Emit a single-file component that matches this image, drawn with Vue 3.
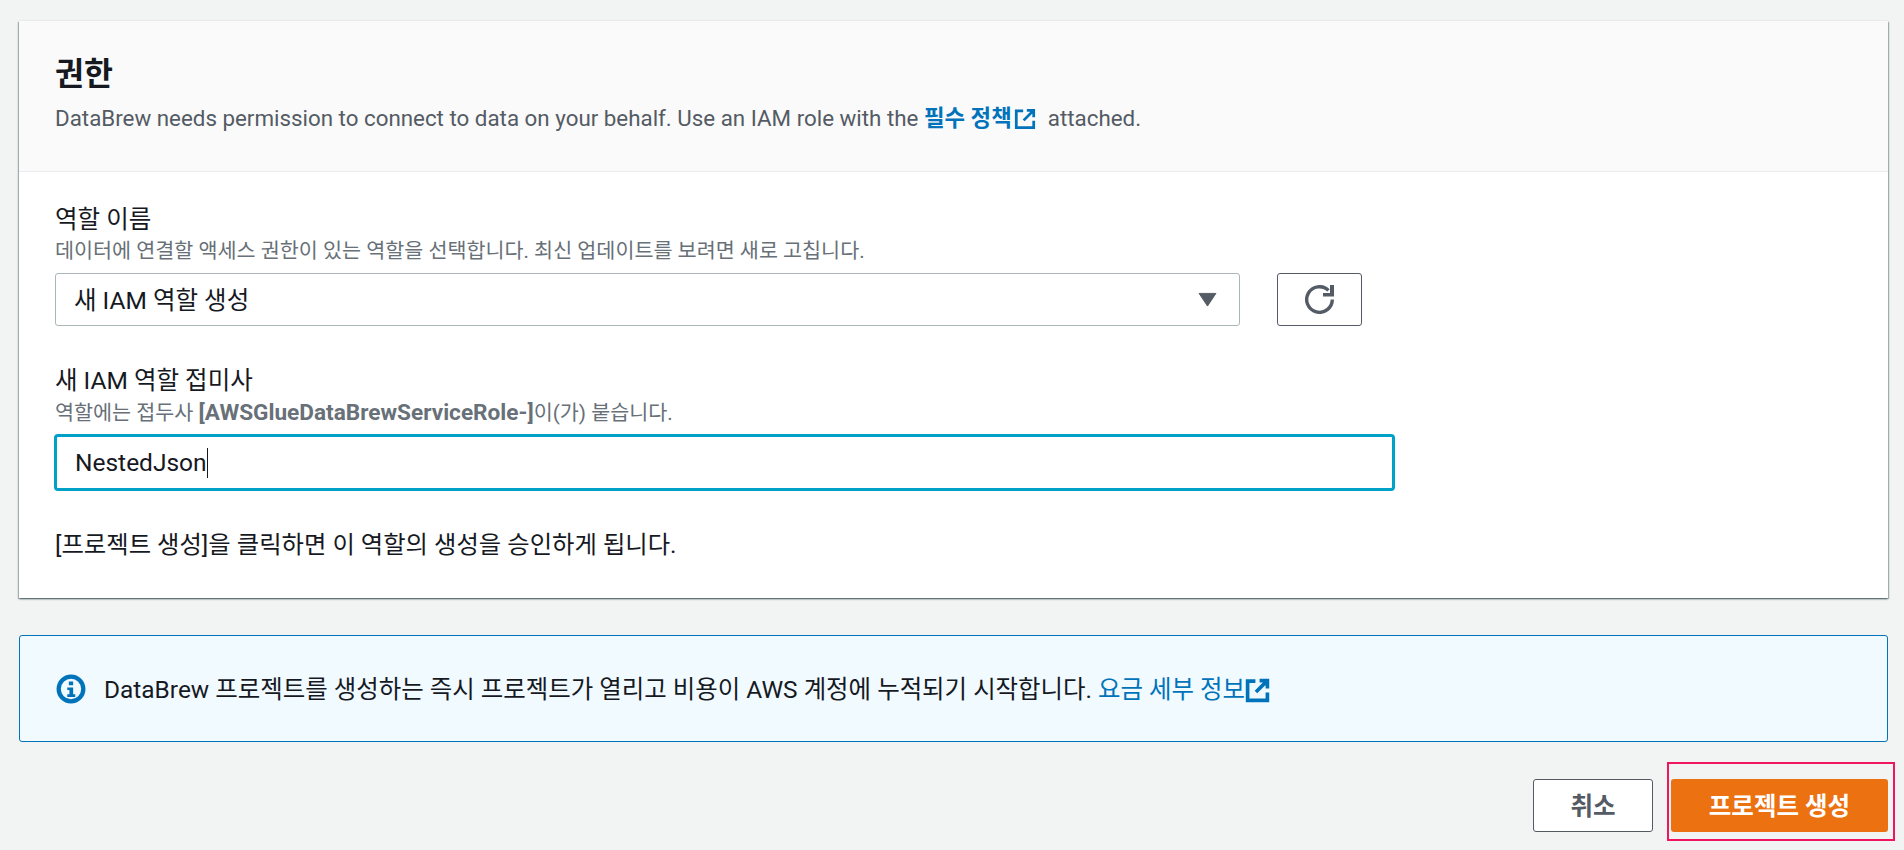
<script setup>
import { ref } from 'vue'

const roleName = ref('새 IAM 역할 생성')
const suffix = ref('NestedJson')
</script>

<template>
  <div class="page">
    <section class="card">
      <header class="card-head">
        <h2>권한</h2>
        <p>
          DataBrew needs permission to connect to data on your behalf. Use an IAM role with the
          <a class="link strong">필수 정책
            <svg class="ext" viewBox="0 0 24 24" fill="none" stroke="currentColor" stroke-width="3">
              <path d="M10 3H2.500v18.500h19V14" />
              <path d="M14 2.500h7.500V10M21 3L10.500 13.500" />
            </svg>
          </a>
          attached.
        </p>
      </header>
      <div class="card-body">
        <div class="field">
          <div class="label">역할 이름</div>
          <div class="hint">데이터에 연결할 액세스 권한이 있는 역할을 선택합니다. 최신 업데이트를 보려면 새로 고칩니다.</div>
          <div class="select-row">
            <div class="select">
              <span>{{ roleName }}</span>
              <svg class="caret" viewBox="0 0 20 16"><path d="M1 1.500h18L10 15z" fill="#545b64" stroke="#545b64" stroke-linejoin="round" /></svg>
            </div>
            <button class="refresh" type="button" aria-label="새로 고침">
              <svg viewBox="0 0 29 29" fill="none" stroke="#545b64" stroke-width="3.400">
                <path d="M27.300 14.500A12.800 12.800 0 1 1 23.500 5.400" />
                <path d="M29 0v11.500H18V8h7V0z" fill="#545b64" stroke="none" />
              </svg>
            </button>
          </div>
        </div>
        <div class="field second">
          <div class="label">새 IAM 역할 접미사</div>
          <div class="hint">역할에는 접두사 <b>[AWSGlueDataBrewServiceRole-]</b>이(가) 붙습니다.</div>
          <div class="input">{{ suffix }}<i class="cursor"></i></div>
        </div>
        <p class="consent">[프로젝트 생성]을 클릭하면 이 역할의 생성을 승인하게 됩니다.</p>
      </div>
    </section>

    <div class="notice">
      <svg class="info" viewBox="0 0 28 28">
        <circle cx="14" cy="14" r="11.500" fill="none" stroke="#0073bb" stroke-width="4" />
        <rect x="12" y="7" width="4" height="3.500" fill="#0073bb" />
        <path d="M10.500 12.500H16V19h2v2.500H10.500V19h2v-4h-2z" fill="#0073bb" />
      </svg>
      <span class="notice-text">DataBrew 프로젝트를 생성하는 즉시 프로젝트가 열리고 비용이 AWS 계정에 누적되기 시작합니다. <a class="link">요금 세부 정보<svg class="ext tight" viewBox="0 0 24 24" fill="none" stroke="currentColor" stroke-width="3.500">
        <path d="M10 3H2.500v18.500h19V14" />
        <path d="M14 2.500h7.500V10M21 3L10.500 13.500" />
      </svg></a></span>
    </div>

    <div class="actions">
      <button class="btn cancel" type="button">취소</button>
      <div class="highlight">
        <button class="btn primary" type="button"><span>프로젝트 생성</span></button>
      </div>
    </div>
  </div>
</template>

<style>
html, body {
  background: #f2f3f3;
}
</style>

<style scoped>
.page {
  height: 850px;
  box-sizing: border-box;
  padding: 21px 16px 0 19px;
  overflow: hidden;
  background: #f2f3f3;
  color: #16191f;
  font-family: Roboto, "Noto Sans CJK KR", sans-serif;
  font-size: 24.500px;
}
.card {
  background: #fff;
  height: 577px;
  box-shadow: 0 1px 2px 0 rgba(0, 28, 36, 0.5), 1px 1px 1px 0 rgba(0, 28, 36, 0.2), -1px 1px 1px 0 rgba(0, 28, 36, 0.2);
}
.card-head {
  height: 151px;
  box-sizing: border-box;
  padding: 34px 36px 0;
  background: #fafafa;
  border-bottom: 1px solid #eaeded;
}
.card-head h2 {
  margin: 0;
  font-size: 31.500px;
  line-height: 40px;
  font-weight: 700;
}
.card-head p {
  margin: 9px 0 0;
  color: #545b64;
  font-size: 22.350px;
  line-height: 28px;
}
.link {
  color: #0073bb;
}
.strong {
  font-weight: 700;
}
.ext {
  display: inline-block;
  width: 22px;
  height: 22px;
  vertical-align: -4px;
  margin: 0 6px 0 -3px;
}
.ext.tight {
  width: 25px;
  height: 25px;
  vertical-align: -5px;
  margin: 0;
}
.card-body {
  padding: 32px 36px 0;
}
.label {
  line-height: 32px;
}
.hint {
  color: #687078;
  font-size: 20.700px;
  line-height: 31px;
}
.hint b {
  font-size: 22.600px;
}
.select-row {
  display: flex;
  gap: 37px;
  margin-top: 6px;
}
.select {
  width: 1185px;
  height: 53px;
  box-sizing: border-box;
  display: flex;
  align-items: center;
  justify-content: space-between;
  padding: 0 22px 3px 18px;
  border: 1px solid #aab7b8;
  border-radius: 3px;
}
.caret {
  width: 19px;
  height: 15px;
  margin-top: 3px;
}
.refresh {
  width: 85px;
  height: 53px;
  padding: 0;
  background: #fff;
  border: 1px solid #545b64;
  border-radius: 3px;
  display: flex;
  align-items: center;
  justify-content: center;
}
.refresh svg {
  width: 29px;
  height: 29px;
}
.second {
  margin-top: 39px;
}
.input {
  width: 1341px;
  height: 57px;
  box-sizing: border-box;
  margin: 5px 0 0 -1px;
  padding: 0 0 0 18px;
  display: flex;
  align-items: center;
  border: 3px solid #00a1c9;
  border-radius: 4px;
}
.cursor {
  width: 1px;
  height: 30px;
  background: #16191f;
}
.consent {
  margin: 39px 0 0;
  font-size: 24.350px;
  line-height: 30px;
}
.notice {
  height: 107px;
  box-sizing: border-box;
  margin-top: 37px;
  padding: 0 36px;
  display: flex;
  align-items: center;
  gap: 18px;
  background: #f1faff;
  border: 1px solid #0073bb;
  border-radius: 3px;
}
.notice-text {
  padding-bottom: 2px;
  font-size: 24.450px;
}
.info {
  width: 30px;
  height: 30px;
  flex: none;
}
.actions {
  display: flex;
  justify-content: flex-end;
  align-items: flex-end;
  gap: 14px;
  margin-top: 20px;
  margin-right: -7px;
}
.btn {
  height: 53px;
  padding: 0 0 2px;
  border-radius: 3px;
  font-family: inherit;
  font-size: 24.500px;
  font-weight: 700;
}
.cancel {
  width: 120px;
  margin-bottom: 9px;
  background: #fff;
  border: 1px solid #545b64;
  color: #545b64;
}
.highlight {
  padding: 15px 5px 7px 2px;
  border: 2px solid #f0155f;
}
.primary {
  display: block;
  width: 217px;
  background: #ec7211;
  border: 0;
  color: #fff;
}
</style>
